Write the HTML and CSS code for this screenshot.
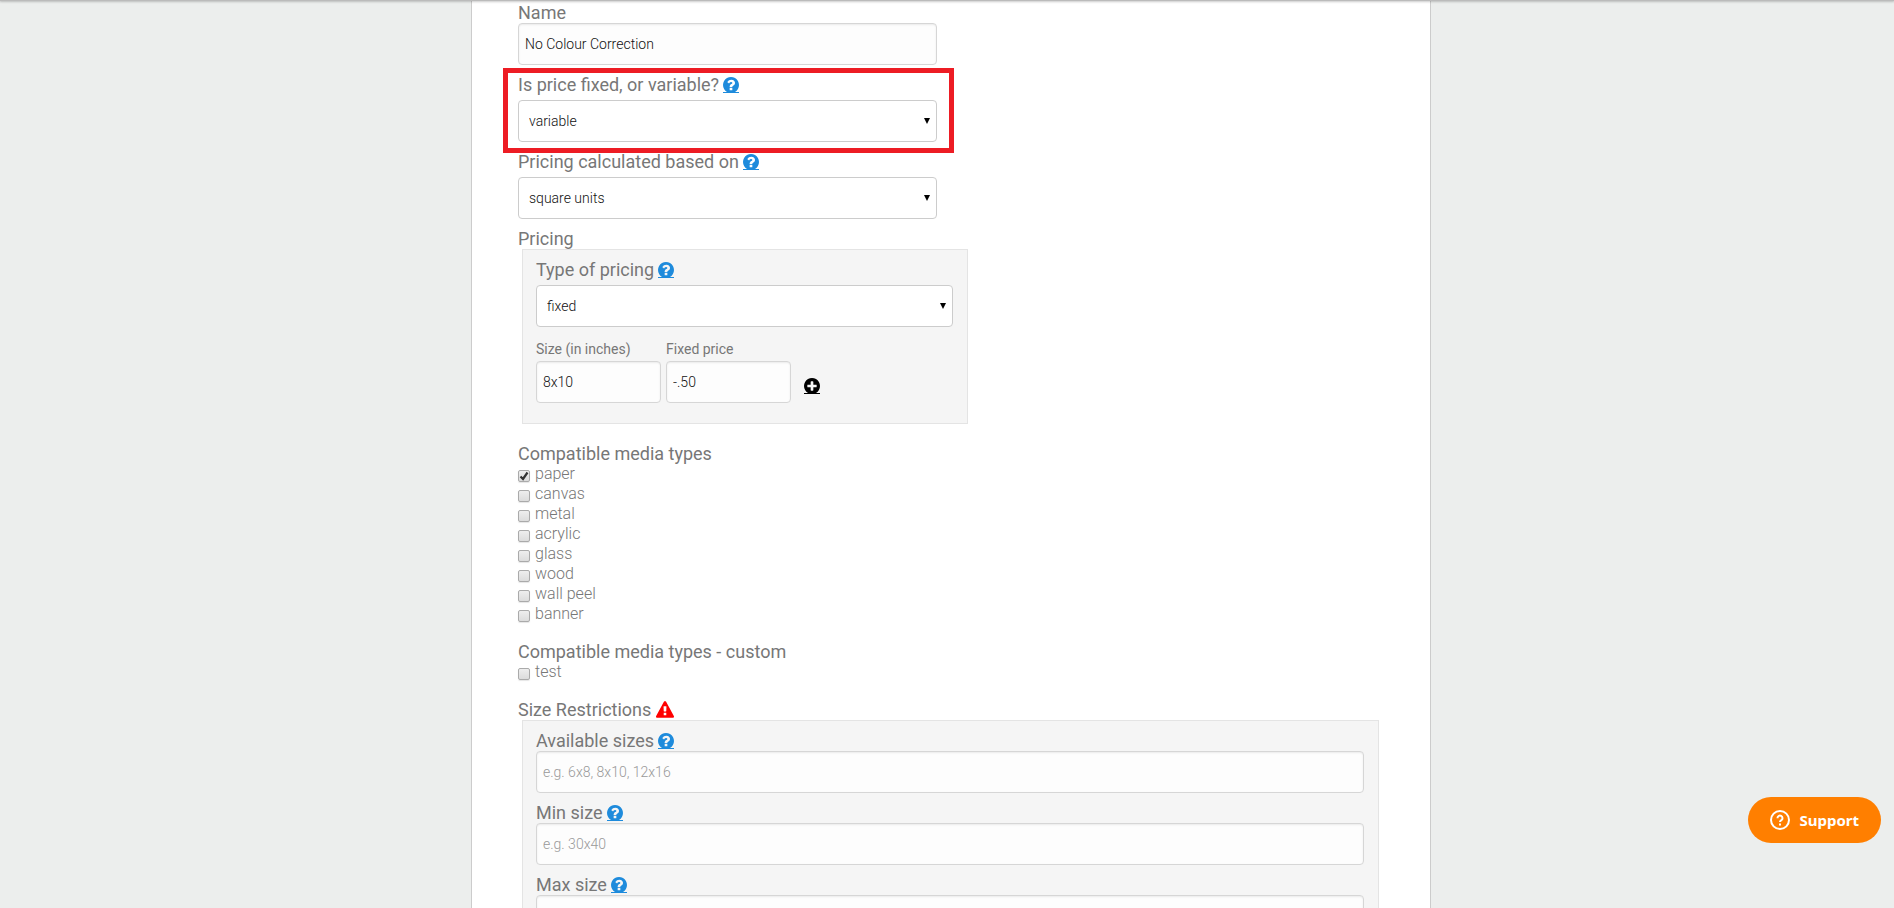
FILE: index.html
```html
<!DOCTYPE html>
<html lang="en">
<head>
    <meta charset="UTF-8">
    <meta name="viewport" content="width=device-width, initial-scale=1.0">
    <title>Edit option</title>
    <link rel="stylesheet" href="styles.css">
</head>
<body>

<!-- Shared icons -->
<svg class="sprite" aria-hidden="true">
    <symbol id="icon-help" viewBox="128 128 1536 1536">
        <path d="M1024 1376v-192q0-14-9-23t-23-9h-192q-14 0-23 9t-9 23v192q0 14 9 23t23 9h192q14 0 23-9t9-23zm256-672q0-88-55.5-163t-138.5-116-170-41q-243 0-371 213-15 24 8 42l132 100q7 6 19 6 16 0 25-12 53-68 86-92 34-24 86-24 48 0 85.5 26t37.5 59q0 38-20 61t-68 45q-63 28-115.5 86.5t-52.5 125.5v36q0 14 9 23t23 9h192q14 0 23-9t9-23q0-19 21.5-49.5t54.5-49.5q32-18 49-28.5t46-35 44.5-48 28-60.5 12.5-81zm384 192q0 209-103 385.5t-279.5 279.5-385.5 103-385.5-103-279.5-279.5-103-385.5 103-385.5 279.5-279.5 385.5-103 385.5 103 279.5 279.5 103 385.5z"/>
    </symbol>
    <symbol id="icon-plus" viewBox="128 128 1536 1536">
        <path d="M1344 960v-128q0-26-19-45t-45-19h-256v-256q0-26-19-45t-45-19h-128q-26 0-45 19t-19 45v256h-256q-26 0-45 19t-19 45v128q0 26 19 45t45 19h256v256q0 26 19 45t45 19h128q26 0 45-19t19-45v-256h256q26 0 45-19t19-45zm320-64q0 209-103 385.5t-279.5 279.5-385.5 103-385.5-103-279.5-279.5-103-385.5 103-385.5 279.5-279.5 385.5-103 385.5 103 279.5 279.5 103 385.5z"/>
    </symbol>
    <symbol id="icon-warning" viewBox="0 0 1792 1664">
        <path d="M1024 1375v-190q0-14-9.500-23.500t-22.500-9.500h-192q-13 0-22.500 9.500t-9.500 23.500v190q0 14 9.500 23.500t22.500 9.500h192q13 0 22.500-9.500t9.500-23.500zm-2-374l18-459q0-12-10-19-13-11-24-11h-220q-11 0-24 11-10 7-10 21l17 457q0 10 10 16.500t24 6.500h185q14 0 23.500-6.500t10.500-16.500zm-14-934l768 1408q35 63-2 126-17 29-46.500 46t-63.500 17h-1536q-34 0-63.500-17t-46.500-46q-37-63-2-126l768-1408q17-31 47-49t65-18 65 18 47 49z"/>
    </symbol>
</svg>

<div class="topbar-shadow"></div>

<main class="panel">
    <form>
        <div class="field">
            <label for="name">Name</label>
            <input type="text" id="name" value="No Colour Correction">
        </div>

        <div class="field highlight">
            <div class="label-row">
                <label for="price-kind">Is price fixed, or variable?</label>
                <a href="#" class="help" aria-label="Help"><svg><use href="#icon-help"/></svg></a>
            </div>
            <select id="price-kind">
                <option>fixed</option>
                <option selected>variable</option>
            </select>
        </div>

        <div class="field">
            <div class="label-row">
                <label for="based-on">Pricing calculated based on</label>
                <a href="#" class="help" aria-label="Help"><svg><use href="#icon-help"/></svg></a>
            </div>
            <select id="based-on">
                <option selected>square units</option>
            </select>
        </div>

        <h2>Pricing</h2>
        <div class="box pricing">
            <div class="label-row">
                <label for="pricing-type">Type of pricing</label>
                <a href="#" class="help" aria-label="Help"><svg><use href="#icon-help"/></svg></a>
            </div>
            <select id="pricing-type">
                <option selected>fixed</option>
            </select>
            <div class="price-row">
                <div class="price-cell">
                    <label for="size">Size (in inches)</label>
                    <input type="text" id="size" value="8x10">
                </div>
                <div class="price-cell">
                    <label for="price">Fixed price</label>
                    <input type="text" id="price" value="-.50">
                </div>
                <a href="#" class="help add" aria-label="Add size"><svg><use href="#icon-plus"/></svg></a>
            </div>
        </div>

        <h2>Compatible media types</h2>
        <div class="checks">
            <label><input type="checkbox" checked>paper</label>
            <label><input type="checkbox">canvas</label>
            <label><input type="checkbox">metal</label>
            <label><input type="checkbox">acrylic</label>
            <label><input type="checkbox">glass</label>
            <label><input type="checkbox">wood</label>
            <label><input type="checkbox">wall peel</label>
            <label><input type="checkbox">banner</label>
        </div>

        <h2>Compatible media types - custom</h2>
        <div class="checks">
            <label><input type="checkbox">test</label>
        </div>

        <h2>Size Restrictions <svg class="warning"><use href="#icon-warning"/></svg></h2>
        <div class="box sizes">
            <div class="field">
                <div class="label-row">
                    <label for="available">Available sizes</label>
                    <a href="#" class="help" aria-label="Help"><svg><use href="#icon-help"/></svg></a>
                </div>
                <input type="text" id="available" placeholder="e.g. 6x8, 8x10, 12x16">
            </div>
            <div class="field">
                <div class="label-row">
                    <label for="min-size">Min size</label>
                    <a href="#" class="help" aria-label="Help"><svg><use href="#icon-help"/></svg></a>
                </div>
                <input type="text" id="min-size" placeholder="e.g. 30x40">
            </div>
            <div class="field">
                <div class="label-row">
                    <label for="max-size">Max size</label>
                    <a href="#" class="help" aria-label="Help"><svg><use href="#icon-help"/></svg></a>
                </div>
                <input type="text" id="max-size">
            </div>
        </div>
    </form>
</main>

<button type="button" class="support">
    <svg viewBox="0 0 20 20" fill="none" stroke="#fff" stroke-width="2">
        <circle cx="10" cy="10" r="9"/>
        <path d="M7.500 8.200a2.500 2.500 0 1 1 3.900 2c-.9.600-1.400 1-1.400 1.900"/>
        <path d="M10 13.500v2"/>
    </svg>
    Support
</button>

</body>
</html>
```
FILE: styles.css
```css
* {
    box-sizing: border-box;
}
body {
    margin: 0;
    padding-left: 8px;
    background-color: #eceeed;
    color: #777;
    font-family: Roboto, "Liberation Sans", sans-serif;
}
.sprite {
    position: absolute;
    width: 0;
    height: 0;
}
/* Bottom edge of the bar above the page */
.topbar-shadow {
    position: fixed;
    top: 0;
    left: 0;
    right: 0;
    height: 1px;
    background-color: #bbb;
    box-shadow: 0 1px 2px rgba(0, 0, 0, 0.3);
    z-index: 5;
}
.panel {
    max-width: 960px;
    min-height: 100vh;
    margin: 0 auto;
    padding: 2px 51px 30px 46px;
    background-color: #fff;
    border: 1px solid #ccc;
    border-width: 0 1px;
}
h2, label {
    display: block;
    margin: 0;
    font-size: 18px;
    font-weight: 400;
    line-height: 21px;
}
.label-row {
    display: flex;
    gap: 4px;
}
.field {
    max-width: 419px;
    margin-bottom: 9px;
}
input[type="text"], select {
    display: block;
    width: 100%;
    height: 42px;
    padding: 0 6px;
    border: 1px solid #d6d6d6;
    border-radius: 4px;
    background-color: #fdfdfd;
    box-shadow: inset 0 1px 2px rgba(0, 0, 0, 0.08);
    color: #111;
    font-family: inherit;
    font-size: 14px;
    font-weight: 300;
}
input::placeholder {
    color: #999;
    opacity: 1;
}
select {
    appearance: none;
    margin-top: 5px;
    padding: 0 10px;
    border-color: #ccc;
    box-shadow: none;
    background: #fff url("data:image/svg+xml,%3Csvg xmlns='http://www.w3.org/2000/svg' width='6' height='6'%3E%3Cpath d='M0 0h6L3 6z'/%3E%3C/svg%3E") no-repeat right 6px center;
}
.highlight {
    position: relative;
}
.highlight::after {
    content: "";
    position: absolute;
    top: -6px;
    right: -17px;
    bottom: -11px;
    left: -15px;
    border: 5px solid #ed1c24;
    pointer-events: none;
}
.help {
    align-self: center;
    width: 16px;
    height: 16px;
    border-bottom: 1px solid #1e8bdc;
    color: #1e8bdc;
}
.help svg {
    display: block;
    width: 16px;
    height: 16px;
    fill: currentColor;
}
.warning {
    width: 18px;
    height: 17px;
    fill: #f00;
    vertical-align: -2px;
}
.box {
    margin-left: 4px;
    padding: 9px 14px 20px 13px;
    background-color: #f5f5f5;
    border: 1px solid #e4e4e4;
}
.pricing {
    max-width: 446px;
    margin-bottom: 19px;
}
.sizes .field {
    max-width: none;
}
.price-row {
    display: flex;
    gap: 5px;
    margin-top: 12px;
}
.price-cell {
    width: 125px;
}
.price-cell label {
    font-size: 14px;
    line-height: 20px;
    margin-bottom: 2px;
}
.add {
    align-self: flex-end;
    margin: 0 8px 9px;
    border-color: #000;
    color: #000;
}
.checks {
    margin-bottom: 17px;
}
.checks label {
    display: flex;
    align-items: center;
    font-size: 16px;
    font-weight: 300;
    line-height: 20px;
}
.checks input {
    appearance: none;
    width: 12px;
    height: 12px;
    margin: 4px 5px 0 0;
    border: 1px solid #aaa;
    border-radius: 2px;
    background: linear-gradient(#eee, #dcdcdc);
    box-shadow: 0 1px 1px rgba(0, 0, 0, 0.1);
}
.checks input:checked {
    background: url("data:image/svg+xml,%3Csvg xmlns='http://www.w3.org/2000/svg' viewBox='0 0 10 10'%3E%3Cpath d='M1.500 5.500L4 8l4.500-6.500' fill='none' stroke='%23333' stroke-width='2.200'/%3E%3C/svg%3E") center / 10px 10px no-repeat, linear-gradient(#eee, #dcdcdc);
}
.support {
    position: fixed;
    right: 13px;
    bottom: 65px;
    display: flex;
    align-items: center;
    gap: 9px;
    height: 46px;
    padding: 0 22px;
    border: none;
    border-radius: 23px;
    background-color: #ff7f00;
    color: #fff;
    font-family: "Noto Sans", sans-serif;
    font-size: 15px;
    font-weight: 700;
    cursor: pointer;
}
.support svg {
    width: 20px;
    height: 20px;
}
```
